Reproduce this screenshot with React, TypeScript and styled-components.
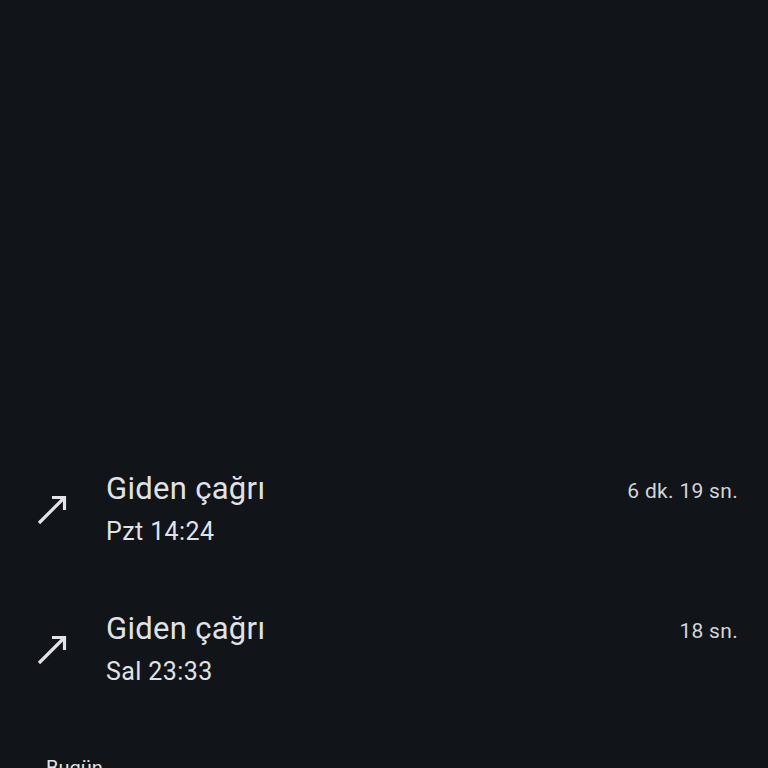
import React from "react";
import styled, { createGlobalStyle } from "styled-components";

const Global = createGlobalStyle`
  html, body { margin: 0; padding: 0; background: #111418; }
  body { font-family: Roboto, "Noto Sans", sans-serif; }
`;

const Screen = styled.div`
  width: 768px;
  height: 768px;
  overflow: hidden;
  background: #111418;
  display: flex;
  flex-direction: column;
  padding-top: 439px;
  box-sizing: border-box;
`;

const Row = styled.div`
  height: 140px;
  flex-shrink: 0;
  display: flex;
  align-items: center;
  padding: 0 30px 0 36px;
  box-sizing: border-box;
`;

const IconBox = styled.div`
  width: 70px;
  height: 32px;
  display: flex;
  align-items: center;
  color: #e3e3e7;
`;

const TextCol = styled.div`
  flex: 1;
  display: flex;
  flex-direction: column;
`;

const TopLine = styled.div`
  display: flex;
  justify-content: space-between;
  align-items: baseline;
`;

const Title = styled.span`
  font-size: 31px;
  line-height: 40px;
  letter-spacing: 0.3px;
  color: #e1e2e6;
`;

const Duration = styled.span`
  font-size: 21px;
  letter-spacing: 0.3px;
  color: #d4d5d9;
  position: relative;
  top: -1px;
`;

const Sub = styled.span`
  font-size: 25px;
  line-height: 34px;
  margin-top: 6px;
  letter-spacing: 0.4px;
  color: #e1e2e6;
`;

const Header = styled.div`
  flex-shrink: 0;
  padding: 37px 0 0 46px;
  font-size: 20px;
  color: #e1e2e6;
`;

const Arrow = () => (
  <svg width="32" height="32" viewBox="0 0 32 32" fill="none">
    <path d="M3 30 L29 4" stroke="currentColor" strokeWidth="3.2" />
    <path d="M16 4.5 H28.5 V17" stroke="currentColor" strokeWidth="3.2" />
  </svg>
);

const calls = [
  { day: "Pzt 14:24", dur: "6 dk. 19 sn." },
  { day: "Sal 23:33", dur: "18 sn." },
];

export default function App() {
  return (
    <>
      <Global />
      <Screen>
        {calls.map((c) => (
          <Row key={c.day}>
            <IconBox>
              <Arrow />
            </IconBox>
            <TextCol>
              <TopLine>
                <Title>Giden çağrı</Title>
                <Duration>{c.dur}</Duration>
              </TopLine>
              <Sub>{c.day}</Sub>
            </TextCol>
          </Row>
        ))}
        <Header>Bugün</Header>
      </Screen>
    </>
  );
}
